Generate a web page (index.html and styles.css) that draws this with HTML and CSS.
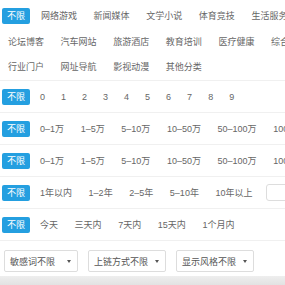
FILE: index.html
```html
<!DOCTYPE html>
<html lang="zh-CN">
<head>
  <meta charset="UTF-8" />
  <title>筛选</title>
  <link rel="stylesheet" href="styles.css">
</head>
<body>
  <div class="filtro">
    <div class="categorias">
      <span class="badge">不限</span>
      <span class="item">网络游戏</span>
      <span class="item">新闻媒体</span>
      <span class="item">文学小说</span>
      <span class="item">体育竞技</span>
      <span class="item">生活服务</span>
      <span class="item">论坛博客</span>
      <span class="item">汽车网站</span>
      <span class="item">旅游酒店</span>
      <span class="item">教育培训</span>
      <span class="item">医疗健康</span>
      <span class="item">综合</span>
      <span class="item">行业门户</span>
      <span class="item">网址导航</span>
      <span class="item">影视动漫</span>
      <span class="item">其他分类</span>
    </div>

    <div class="linha digitos">
      <span class="badge">不限</span>
      <span class="item">0</span>
      <span class="item">1</span>
      <span class="item">2</span>
      <span class="item">3</span>
      <span class="item">4</span>
      <span class="item">5</span>
      <span class="item">6</span>
      <span class="item">7</span>
      <span class="item">8</span>
      <span class="item">9</span>
    </div>

    <div class="linha">
      <span class="badge">不限</span>
      <span class="item">0–1万</span>
      <span class="item">1–5万</span>
      <span class="item">5–10万</span>
      <span class="item">10–50万</span>
      <span class="item">50–100万</span>
      <span class="item">100万以上</span>
    </div>

    <div class="linha">
      <span class="badge">不限</span>
      <span class="item">0–1万</span>
      <span class="item">1–5万</span>
      <span class="item">5–10万</span>
      <span class="item">10–50万</span>
      <span class="item">50–100万</span>
      <span class="item">100万以上</span>
    </div>

    <div class="linha">
      <span class="badge">不限</span>
      <span class="item">1年以内</span>
      <span class="item">1–2年</span>
      <span class="item">2–5年</span>
      <span class="item">5–10年</span>
      <span class="item">10年以上</span>
      <span class="campo"></span>
    </div>

    <div class="linha">
      <span class="badge">不限</span>
      <span class="item">今天</span>
      <span class="item">三天内</span>
      <span class="item">7天内</span>
      <span class="item">15天内</span>
      <span class="item">1个月内</span>
    </div>

    <div class="selects">
      <div class="select pequeno"><span>敏感词不限</span><i class="seta"></i></div>
      <div class="select"><span>上链方式不限</span><i class="seta"></i></div>
      <div class="select"><span>显示风格不限</span><i class="seta"></i></div>
    </div>
  </div>
  <div class="rodape"></div>
</body>
</html>
```

FILE: styles.css
```css
body {
  margin: 0;
  font-family: 'Liberation Sans', 'Noto Sans CJK SC', sans-serif;
  font-size: 9px;
  color: #666;
  background-color: #fff;
  overflow: hidden;
}

.filtro {
  width: 285px;
  height: 276px;
  overflow: hidden;
}

.categorias {
  display: flex;
  flex-wrap: wrap;
  row-gap: 9.5px;
  width: 300px;
  padding: 8px 0 5px 2px;
  border-bottom: 1px solid #f0f0f0;
}

.linha {
  display: flex;
  align-items: center;
  flex-wrap: nowrap;
  height: 32px;
  box-sizing: border-box;
  padding-left: 2px;
  border-bottom: 1px solid #f0f0f0;
  white-space: nowrap;
}

.badge {
  flex: none;
  width: 28px;
  height: 16px;
  line-height: 16px;
  text-align: center;
  background-color: #249fe0;
  color: #fff;
  border-radius: 2px;
  margin-right: 5px;
}

.item {
  flex: none;
  height: 16px;
  line-height: 16px;
  padding: 0 4px;
  margin-right: 8.6px;
}

.categorias .badge + .item {
  margin-left: 2px;
}

.categorias .item:nth-child(7),
.categorias .item:nth-child(13) {
  margin-left: 2px;
}

.linha .badge + .item {
  margin-left: 1px;
}

.digitos .item {
  margin-right: 8px;
}

.campo {
  flex: none;
  width: 40px;
  height: 15px;
  border: 1px solid #ddd;
  border-radius: 3px;
  margin-left: 1px;
}

.selects {
  display: flex;
  gap: 10px;
  padding: 9px 0 0 4px;
}

.select {
  display: flex;
  align-items: center;
  justify-content: space-between;
  width: 78px;
  height: 22px;
  box-sizing: border-box;
  padding: 0 6px 0 5px;
  border: 1px solid #ddd;
  border-radius: 2px;
  color: #555;
}

.select.pequeno {
  width: 74px;
}

.seta {
  width: 0;
  height: 0;
  border-left: 2.5px solid transparent;
  border-right: 2.5px solid transparent;
  border-top: 3px solid #555;
}

.rodape {
  height: 9px;
  background: linear-gradient(#eeeeee, #e2e2e2);
}
```
